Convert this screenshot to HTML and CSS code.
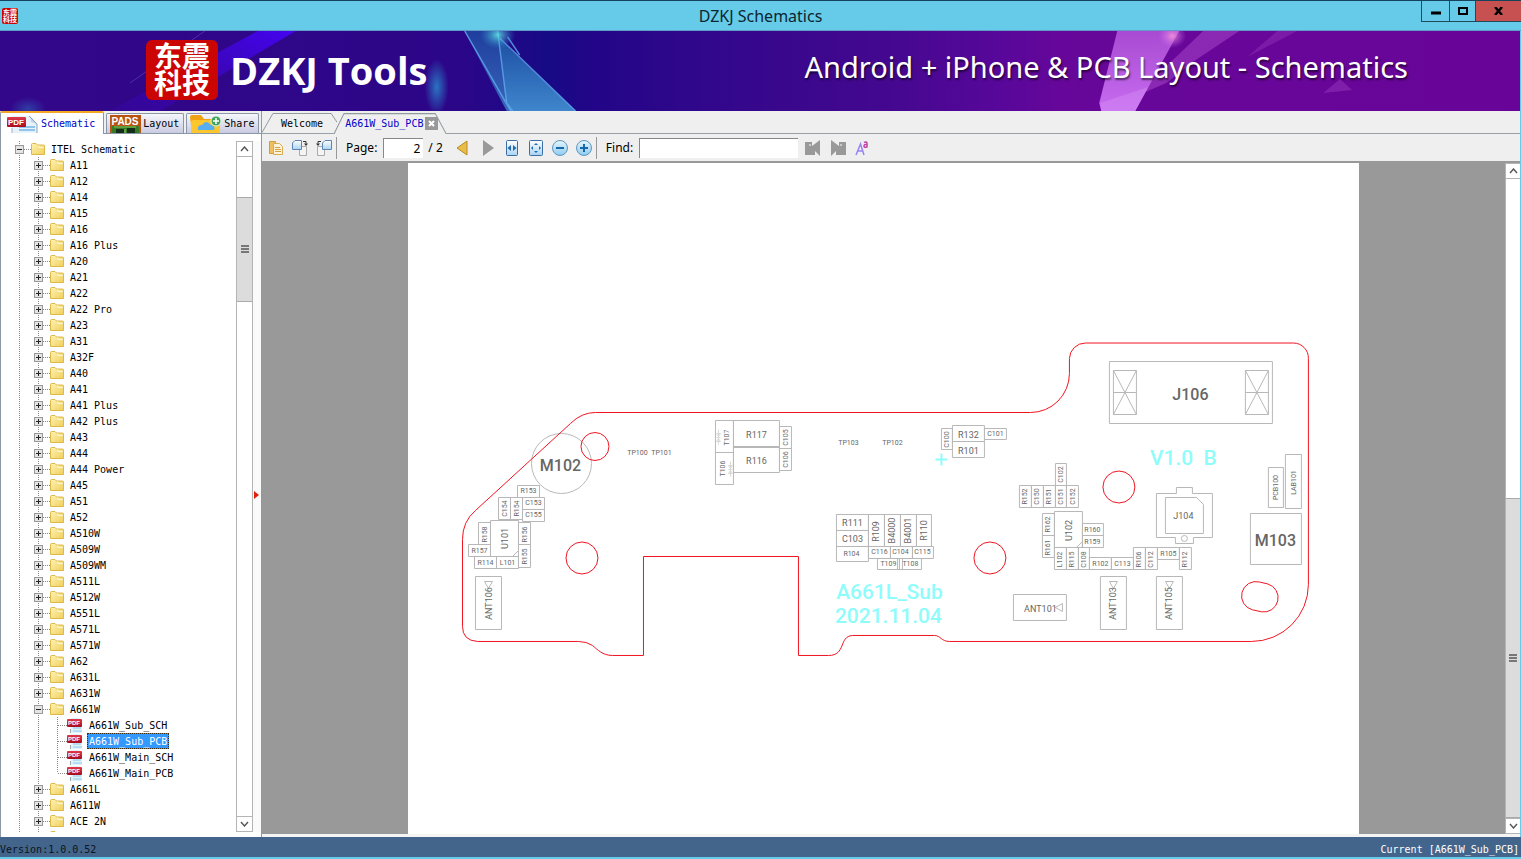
FILE: index.html
```html
<!DOCTYPE html>
<html lang="en">

<head>
    <meta charset="utf-8">
    <meta name="viewport" content="width=device-width, initial-scale=1">
    <title>DZKJ Schematics</title>
    <link rel="stylesheet" href="styles.css">
</head>

<body>
    <!-- shared icons -->
    <svg class="defs" width="0" height="0" aria-hidden="true">
        <defs>
            <linearGradient id="folder-fill" x1="0" y1="0" x2="1" y2="1">
                <stop offset="0" stop-color="#fff3b4"/>
                <stop offset="1" stop-color="#f0cf5c"/>
            </linearGradient>
            <linearGradient id="pdf-fill" x1="0" y1="0" x2="0" y2="1">
                <stop offset="0" stop-color="#e0394a"/>
                <stop offset="1" stop-color="#a80c1c"/>
            </linearGradient>
            <linearGradient id="ball-fill" x1="0" y1="0" x2="0" y2="1">
                <stop offset="0" stop-color="#e8f6fd"/>
                <stop offset="1" stop-color="#8dcbf0"/>
            </linearGradient>
            <linearGradient id="page-fill" x1="0" y1="0" x2="0" y2="1">
                <stop offset="0" stop-color="#ffffff"/>
                <stop offset="1" stop-color="#a9d3f2"/>
            </linearGradient>
        </defs>
        <symbol id="folder" viewBox="0 0 14 12">
            <path d="M.5 11.5V1.5q0-1 1-1h3.500l1.500 1.500h6q1 0 1 1v8.500z" fill="url(#folder-fill)" stroke="#dcb84a"/>
            <path d="M8 2.500V4.500h5" fill="none" stroke="#fff6cc"/>
        </symbol>
        <symbol id="pdf" viewBox="0 0 16 16">
            <path d="M4 1h8l3 3v12H4z" fill="#dff1fb"/>
            <path d="M6 11h8M6 14h9" stroke="#8ecbe8"/>
            <path d="M3.500 12v4" stroke="#9aa"/>
            <rect x="0" y="2" width="15" height="8" rx="1" fill="url(#pdf-fill)"/>
            <text x="7" y="8" class="pdf-mark-small">PDF</text>
        </symbol>
        <symbol id="plus" viewBox="0 0 9 9">
            <rect x=".5" y=".5" width="8" height="8" fill="#e4e4e4" stroke="#999"/>
            <path d="M2 4.500h5M4.500 2v5" stroke="#222"/>
        </symbol>
        <symbol id="minus" viewBox="0 0 9 9">
            <rect x=".5" y=".5" width="8" height="8" fill="#e4e4e4" stroke="#999"/>
            <path d="M2 4.500h5" stroke="#222"/>
        </symbol>
        <symbol id="up" viewBox="0 0 9 6"><path d="M1 5l3.500-4L8 5" fill="none" stroke="#555" stroke-width="1.400"/></symbol>
        <symbol id="down" viewBox="0 0 9 6"><path d="M1 1l3.500 4L8 1" fill="none" stroke="#555" stroke-width="1.400"/></symbol>
        <symbol id="grip" viewBox="0 0 8 8"><path d="M0 1h8M0 4h8M0 7h8" stroke="#555" stroke-width="1.500"/></symbol>
    </svg>

    <header class="titlebar">
        <span class="app-icon">东震<br>科技</span>
        <h1>DZKJ Schematics</h1>
        <div class="window-buttons">
            <button type="button" class="win-min" aria-label="Minimize"><svg width="10" height="8" viewBox="0 0 10 8"><path d="M0 6h10" stroke="#000" stroke-width="3"/></svg></button>
            <button type="button" class="win-max" aria-label="Maximize"><svg width="10" height="8" viewBox="0 0 10 8"><rect x="1" y="1" width="8" height="6" fill="none" stroke="#000" stroke-width="2"/></svg></button>
            <button type="button" class="win-close" aria-label="Close"><svg width="9" height="8" viewBox="0 0 9 8"><path d="M1 0l7 8M8 0L1 8" stroke="#000" stroke-width="2.500"/></svg></button>
        </div>
    </header>

    <div class="banner">
        <svg class="banner-art" viewBox="0 0 1521 80" preserveAspectRatio="none" aria-hidden="true">
            <defs>
                <linearGradient id="sky" x1="0" x2="1" y1="0" y2="0">
                    <stop offset="0" stop-color="#33078a"/>
                    <stop offset=".3" stop-color="#2c0688"/>
                    <stop offset=".36" stop-color="#170a85"/>
                    <stop offset=".39" stop-color="#220588"/>
                    <stop offset=".44" stop-color="#2d078a"/>
                    <stop offset=".58" stop-color="#43088f"/>
                    <stop offset=".66" stop-color="#58079a"/>
                    <stop offset=".7" stop-color="#67079a"/>
                    <stop offset="1" stop-color="#680598"/>
                </linearGradient>
                <linearGradient id="beam" x1="1" x2="0" y1="0" y2="1">
                    <stop offset="0" stop-color="#4404f0"/>
                    <stop offset="1" stop-color="#3b06b0" stop-opacity=".3"/>
                </linearGradient>
                <linearGradient id="glass" x1="0" x2="0" y1="0" y2="1">
                    <stop offset="0" stop-color="#1d4fa4"/>
                    <stop offset="1" stop-color="#3f86cc"/>
                </linearGradient>
                <linearGradient id="pink" x1="0" x2="0" y1="0" y2="1">
                    <stop offset="0" stop-color="#a84bd2"/>
                    <stop offset="1" stop-color="#c76cf0"/>
                </linearGradient>
                <radialGradient id="glow">
                    <stop offset="0" stop-color="#2a80c8" stop-opacity=".9"/>
                    <stop offset="1" stop-color="#2a80c8" stop-opacity="0"/>
                </radialGradient>
                <radialGradient id="glow-teal">
                    <stop offset="0" stop-color="#5ee0e0" stop-opacity=".9"/>
                    <stop offset="1" stop-color="#2a80c8" stop-opacity="0"/>
                </radialGradient>
                <radialGradient id="glow-rose">
                    <stop offset="0" stop-color="#ff9ad8" stop-opacity=".8"/>
                    <stop offset="1" stop-color="#c76cf0" stop-opacity="0"/>
                </radialGradient>
            </defs>
            <rect width="1521" height="80" fill="url(#sky)"/>
            <path d="M258 0h38L160 80h-50z" fill="url(#beam)"/>
            <path d="M205 0L130 52" stroke="#6c50d0" opacity=".5"/>
            <ellipse cx="28" cy="78" rx="18" ry="12" fill="url(#glow)" opacity=".5"/>
            <ellipse cx="437" cy="56" rx="12" ry="28" fill="url(#glow)"/>
            <path d="M465 0h33l2 8 12 72h-5z" fill="url(#glass)" opacity=".75"/>
            <path d="M500 8l76 72h-64l-5-10z" fill="url(#glass)"/>
            <path d="M465 0l46 80M498 0l9 72 6 8M500 7l76 73M508 6l12 18" fill="none" stroke="#62a9ee" stroke-width="1.500" opacity=".8"/>
            <ellipse cx="498" cy="4" rx="18" ry="14" fill="url(#glow-teal)"/>
            <path d="M1204 0h36l-45 30-28 22-32 14z" fill="#9a38be" opacity=".7"/>
            <path d="M1278 0h20l-50 26z" fill="#8424ae" opacity=".7"/>
            <path d="M1118 0h62l-44 80h-34l-2-8z" fill="url(#pink)"/>
            <path d="M1101 72l48-16-13 24h-34z" fill="#d48af4" opacity=".5"/>
            <ellipse cx="1173" cy="5" rx="14" ry="12" fill="url(#glow-rose)"/>
            <path d="M1341 48l12 11-29 3z" fill="#8424ae" opacity=".8"/>
        </svg>
        <div class="brand">
            <span class="logo">东震<br>科技</span>
            <strong>DZKJ Tools</strong>
        </div>
        <p class="slogan">Android + iPhone &amp; PCB Layout - Schematics</p>
    </div>

    <main class="workspace">
        <aside class="sidebar">
            <nav class="side-tabs">
                <button type="button" class="side-tab active">
                    <svg width="32" height="19" viewBox="0 0 32 19"><path d="M5 2h18l7 7v10H5z" fill="#e6f2fc"/><path d="M23 2l1 6 6 2z" fill="#c5d4e4"/><path d="M22 2l8 8v9" fill="none" stroke="#8fa0b4"/><path d="M12 13h16M12 16h16" stroke="#8fc5ea" stroke-width="2"/><path d="M5 14v5" stroke="#aab"/><rect x="0" y="3" width="19" height="10" rx="1" fill="url(#pdf-fill)"/><text x="9" y="11" class="pdf-mark">PDF</text></svg>
                    <span>Schematic</span>
                </button>
                <button type="button" class="side-tab">
                    <svg width="31" height="18" viewBox="0 0 31 18"><rect width="31" height="18" fill="#b85512"/><rect x="2" y="11" width="27" height="7" fill="#347a28"/><path d="M6 14h8v4H6zM17 13h8v5h-8z" fill="#152e18"/><path d="M4 12h22M15 14v4" stroke="#8cc152"/><text x="15" y="10" class="pads-mark">PADS</text></svg>
                    <span>Layout</span>
                </button>
                <button type="button" class="side-tab">
                    <svg width="32" height="18" viewBox="0 0 32 18"><path d="M0 2q0-2 2-2h9l3 4h16v14H2z" fill="#f0a312"/><path d="M1 7q0-2 3-2h26v13H1z" fill="#fdc62d"/><path d="M8 15q-1-5 4-5 4-6 9 0 5 1 3 5z" fill="#58aef0"/><circle cx="26" cy="6" r="5" fill="#3fa45b" stroke="#e6f5e9"/><path d="M23 6h6M26 3v6" stroke="#fff" stroke-width="1.500"/></svg>
                    <span>Share</span>
                </button>
            </nav>
            <div class="side-panel">
                <div class="tree">
                    <ul>
                        <li><div class="row"><button class="toggle" aria-label="Collapse"><svg><use href="#minus"/></svg></button><i></i><svg class="folder"><use href="#folder"/></svg><span>ITEL Schematic</span></div>
                            <ul>
                                <li><div class="row"><button class="toggle" aria-label="Expand"><svg><use href="#plus"/></svg></button><i></i><svg class="folder"><use href="#folder"/></svg><span>A11</span></div></li>
                                <li><div class="row"><button class="toggle" aria-label="Expand"><svg><use href="#plus"/></svg></button><i></i><svg class="folder"><use href="#folder"/></svg><span>A12</span></div></li>
                                <li><div class="row"><button class="toggle" aria-label="Expand"><svg><use href="#plus"/></svg></button><i></i><svg class="folder"><use href="#folder"/></svg><span>A14</span></div></li>
                                <li><div class="row"><button class="toggle" aria-label="Expand"><svg><use href="#plus"/></svg></button><i></i><svg class="folder"><use href="#folder"/></svg><span>A15</span></div></li>
                                <li><div class="row"><button class="toggle" aria-label="Expand"><svg><use href="#plus"/></svg></button><i></i><svg class="folder"><use href="#folder"/></svg><span>A16</span></div></li>
                                <li><div class="row"><button class="toggle" aria-label="Expand"><svg><use href="#plus"/></svg></button><i></i><svg class="folder"><use href="#folder"/></svg><span>A16 Plus</span></div></li>
                                <li><div class="row"><button class="toggle" aria-label="Expand"><svg><use href="#plus"/></svg></button><i></i><svg class="folder"><use href="#folder"/></svg><span>A20</span></div></li>
                                <li><div class="row"><button class="toggle" aria-label="Expand"><svg><use href="#plus"/></svg></button><i></i><svg class="folder"><use href="#folder"/></svg><span>A21</span></div></li>
                                <li><div class="row"><button class="toggle" aria-label="Expand"><svg><use href="#plus"/></svg></button><i></i><svg class="folder"><use href="#folder"/></svg><span>A22</span></div></li>
                                <li><div class="row"><button class="toggle" aria-label="Expand"><svg><use href="#plus"/></svg></button><i></i><svg class="folder"><use href="#folder"/></svg><span>A22 Pro</span></div></li>
                                <li><div class="row"><button class="toggle" aria-label="Expand"><svg><use href="#plus"/></svg></button><i></i><svg class="folder"><use href="#folder"/></svg><span>A23</span></div></li>
                                <li><div class="row"><button class="toggle" aria-label="Expand"><svg><use href="#plus"/></svg></button><i></i><svg class="folder"><use href="#folder"/></svg><span>A31</span></div></li>
                                <li><div class="row"><button class="toggle" aria-label="Expand"><svg><use href="#plus"/></svg></button><i></i><svg class="folder"><use href="#folder"/></svg><span>A32F</span></div></li>
                                <li><div class="row"><button class="toggle" aria-label="Expand"><svg><use href="#plus"/></svg></button><i></i><svg class="folder"><use href="#folder"/></svg><span>A40</span></div></li>
                                <li><div class="row"><button class="toggle" aria-label="Expand"><svg><use href="#plus"/></svg></button><i></i><svg class="folder"><use href="#folder"/></svg><span>A41</span></div></li>
                                <li><div class="row"><button class="toggle" aria-label="Expand"><svg><use href="#plus"/></svg></button><i></i><svg class="folder"><use href="#folder"/></svg><span>A41 Plus</span></div></li>
                                <li><div class="row"><button class="toggle" aria-label="Expand"><svg><use href="#plus"/></svg></button><i></i><svg class="folder"><use href="#folder"/></svg><span>A42 Plus</span></div></li>
                                <li><div class="row"><button class="toggle" aria-label="Expand"><svg><use href="#plus"/></svg></button><i></i><svg class="folder"><use href="#folder"/></svg><span>A43</span></div></li>
                                <li><div class="row"><button class="toggle" aria-label="Expand"><svg><use href="#plus"/></svg></button><i></i><svg class="folder"><use href="#folder"/></svg><span>A44</span></div></li>
                                <li><div class="row"><button class="toggle" aria-label="Expand"><svg><use href="#plus"/></svg></button><i></i><svg class="folder"><use href="#folder"/></svg><span>A44 Power</span></div></li>
                                <li><div class="row"><button class="toggle" aria-label="Expand"><svg><use href="#plus"/></svg></button><i></i><svg class="folder"><use href="#folder"/></svg><span>A45</span></div></li>
                                <li><div class="row"><button class="toggle" aria-label="Expand"><svg><use href="#plus"/></svg></button><i></i><svg class="folder"><use href="#folder"/></svg><span>A51</span></div></li>
                                <li><div class="row"><button class="toggle" aria-label="Expand"><svg><use href="#plus"/></svg></button><i></i><svg class="folder"><use href="#folder"/></svg><span>A52</span></div></li>
                                <li><div class="row"><button class="toggle" aria-label="Expand"><svg><use href="#plus"/></svg></button><i></i><svg class="folder"><use href="#folder"/></svg><span>A510W</span></div></li>
                                <li><div class="row"><button class="toggle" aria-label="Expand"><svg><use href="#plus"/></svg></button><i></i><svg class="folder"><use href="#folder"/></svg><span>A509W</span></div></li>
                                <li><div class="row"><button class="toggle" aria-label="Expand"><svg><use href="#plus"/></svg></button><i></i><svg class="folder"><use href="#folder"/></svg><span>A509WM</span></div></li>
                                <li><div class="row"><button class="toggle" aria-label="Expand"><svg><use href="#plus"/></svg></button><i></i><svg class="folder"><use href="#folder"/></svg><span>A511L</span></div></li>
                                <li><div class="row"><button class="toggle" aria-label="Expand"><svg><use href="#plus"/></svg></button><i></i><svg class="folder"><use href="#folder"/></svg><span>A512W</span></div></li>
                                <li><div class="row"><button class="toggle" aria-label="Expand"><svg><use href="#plus"/></svg></button><i></i><svg class="folder"><use href="#folder"/></svg><span>A551L</span></div></li>
                                <li><div class="row"><button class="toggle" aria-label="Expand"><svg><use href="#plus"/></svg></button><i></i><svg class="folder"><use href="#folder"/></svg><span>A571L</span></div></li>
                                <li><div class="row"><button class="toggle" aria-label="Expand"><svg><use href="#plus"/></svg></button><i></i><svg class="folder"><use href="#folder"/></svg><span>A571W</span></div></li>
                                <li><div class="row"><button class="toggle" aria-label="Expand"><svg><use href="#plus"/></svg></button><i></i><svg class="folder"><use href="#folder"/></svg><span>A62</span></div></li>
                                <li><div class="row"><button class="toggle" aria-label="Expand"><svg><use href="#plus"/></svg></button><i></i><svg class="folder"><use href="#folder"/></svg><span>A631L</span></div></li>
                                <li><div class="row"><button class="toggle" aria-label="Expand"><svg><use href="#plus"/></svg></button><i></i><svg class="folder"><use href="#folder"/></svg><span>A631W</span></div></li>
                                <li><div class="row"><button class="toggle" aria-label="Collapse"><svg><use href="#minus"/></svg></button><i></i><svg class="folder"><use href="#folder"/></svg><span>A661W</span></div>
                                    <ul class="files">
                                        <li><div class="row"><i></i><svg class="file"><use href="#pdf"/></svg><a href="#">A661W_Sub_SCH</a></div></li>
                                        <li><div class="row"><i></i><svg class="file"><use href="#pdf"/></svg><a href="#" class="selected">A661W_Sub_PCB</a></div></li>
                                        <li><div class="row"><i></i><svg class="file"><use href="#pdf"/></svg><a href="#">A661W_Main_SCH</a></div></li>
                                        <li><div class="row"><i></i><svg class="file"><use href="#pdf"/></svg><a href="#">A661W_Main_PCB</a></div></li>
                                    </ul>
                                </li>
                                <li><div class="row"><button class="toggle" aria-label="Expand"><svg><use href="#plus"/></svg></button><i></i><svg class="folder"><use href="#folder"/></svg><span>A661L</span></div></li>
                                <li><div class="row"><button class="toggle" aria-label="Expand"><svg><use href="#plus"/></svg></button><i></i><svg class="folder"><use href="#folder"/></svg><span>A611W</span></div></li>
                                <li><div class="row"><button class="toggle" aria-label="Expand"><svg><use href="#plus"/></svg></button><i></i><svg class="folder"><use href="#folder"/></svg><span>ACE 2N</span></div></li>
                                <li><div class="row"><button class="toggle" aria-label="Expand"><svg><use href="#plus"/></svg></button><i></i><svg class="folder"><use href="#folder"/></svg></div></li>
                            </ul>
                        </li>
                    </ul>
                </div>
                <div class="scrollbar tree-scroll">
                    <button type="button" aria-label="Scroll up"><svg width="9" height="6"><use href="#up"/></svg></button>
                    <div class="track-before"></div>
                    <div class="thumb"><svg width="8" height="8"><use href="#grip"/></svg></div>
                    <div class="track-after"></div>
                    <button type="button" aria-label="Scroll down"><svg width="9" height="6"><use href="#down"/></svg></button>
                </div>
                <div class="splitter"><svg width="5" height="8" viewBox="0 0 5 8"><path d="M0 0l5 4-5 4z" fill="#e0200c"/></svg></div>
            </div>
        </aside>

        <section class="viewer">
            <nav class="doc-tabs">
                <button type="button" class="doc-tab welcome">
                    <svg viewBox="0 0 76 22" preserveAspectRatio="none"><path d="M0 21.500L11 2.500h59l6 9" /></svg>
                    <span>Welcome</span>
                </button>
                <div class="doc-tab active">
                    <svg viewBox="0 0 112 22" preserveAspectRatio="none"><path d="M0 22L10 2.500h91L112 22"/></svg>
                    <button type="button" class="doc-name">A661W_Sub_PCB</button>
                    <button type="button" class="tab-close" aria-label="Close tab"><svg width="7" height="7" viewBox="0 0 7 7"><path d="M1 1l5 5M6 1L1 6" stroke="#fff" stroke-width="2"/></svg></button>
                </div>
            </nav>

            <div class="toolbar">
                <button type="button" aria-label="Open"><svg width="16" height="16" viewBox="0 0 16 16"><path d="M1.500 1.500h6v12h-6z" fill="#f0c060" stroke="#cf9c3c"/><path d="M5.500 3.500h6l3 3v8h-9z" fill="#fdf3d8" stroke="#d9ab55"/><path d="M7 7.500h5M7 9.500h6M7 11.500h6" stroke="#cfa04a"/></svg></button>
                <button type="button" aria-label="Rotate right"><svg width="16" height="16" viewBox="0 0 16 16"><path d="M7.500 6.500h7v9h-7z" fill="#f4f4f4" stroke="#aaa"/><path d="M.5 3l2.500-2.500h6.500v9H.5z" fill="url(#page-fill)" stroke="#5b86b4"/><path d="M11 1.500h3v2" fill="none" stroke="#333"/><path d="M12 3.500h4l-2 2.500z" fill="#333"/></svg></button>
                <button type="button" aria-label="Rotate left"><svg width="16" height="16" viewBox="0 0 16 16"><path d="M1.500 6.500h7v9h-7z" fill="#f4f4f4" stroke="#aaa"/><path d="M6.500 3L9 .5h6.500v9h-9z" fill="url(#page-fill)" stroke="#5b86b4"/><path d="M5 1.500H2v2" fill="none" stroke="#333"/><path d="M0 3.500h4L2 6z" fill="#333"/></svg></button>
                <span class="separator"></span>
                <label for="page-number">Page:</label>
                <input type="text" id="page-number" value="2">
                <span class="page-count">/ 2</span>
                <button type="button" aria-label="Previous page"><svg width="12" height="16" viewBox="0 0 12 16"><path d="M11 1v14L1 8z" fill="#e9bd4a" stroke="#b98a1c"/></svg></button>
                <button type="button" class="next" aria-label="Next page"><svg width="12" height="16" viewBox="0 0 12 16"><path d="M1 0v16l11-8z" fill="#999"/></svg></button>
                <button type="button" aria-label="Fit width"><svg width="12" height="16" viewBox="0 0 12 16"><rect x=".5" y=".5" width="11" height="15" rx="1" fill="url(#page-fill)" stroke="#3a6ea5"/><path d="M5 5v6L1.500 8zM7 5v6l3.500-3z" fill="#1f6cb0"/></svg></button>
                <button type="button" aria-label="Fit page"><svg width="14" height="16" viewBox="0 0 14 16"><rect x=".5" y=".5" width="13" height="15" rx="1" fill="url(#page-fill)" stroke="#3a6ea5"/><path d="M7 3l2 2H5zM7 13l-2-2h4zM2 8l2-2v4zM12 8l-2-2v4z" fill="#1f6cb0"/></svg></button>
                <button type="button" aria-label="Zoom out"><svg width="16" height="16" viewBox="0 0 16 16"><circle cx="8" cy="8" r="7.500" fill="url(#ball-fill)" stroke="#5f97bd"/><path d="M4 8h8" stroke="#1668a8" stroke-width="2"/></svg></button>
                <button type="button" aria-label="Zoom in"><svg width="16" height="16" viewBox="0 0 16 16"><circle cx="8" cy="8" r="7.500" fill="url(#ball-fill)" stroke="#5f97bd"/><path d="M4 8h8M8 4v8" stroke="#1668a8" stroke-width="2"/></svg></button>
                <span class="separator"></span>
                <label for="find">Find:</label>
                <input type="text" id="find">
                <button type="button" class="next" aria-label="Find previous"><svg width="15" height="16" viewBox="0 0 15 16"><path d="M0 2h7v4l8-6v16l-5-5v4H0z" fill="#999"/><circle cx="5" cy="5" r="1" fill="#ddd"/></svg></button>
                <button type="button" class="next" aria-label="Find next"><svg width="15" height="16" viewBox="0 0 15 16"><path d="M15 2H8v4L0 0v16l5-5v4h10z" fill="#999"/><circle cx="10" cy="5" r="1" fill="#ddd"/></svg></button>
                <button type="button" aria-label="Match case"><svg width="14" height="16" viewBox="0 0 14 16"><path d="M1 15L5.500 4 9 15M3 11h5" fill="none" stroke="#9a82f4" stroke-width="1.500"/><path d="M9 2.500q3-1.500 3 1v4M12 4.500q-3-.5-3 1.500t3 1" fill="none" stroke="#c044a4" stroke-width="1.500"/></svg></button>
            </div>

            <div class="canvas">
                <div class="sheet-area">
                    <div class="sheet">
                        <svg class="board" viewBox="407.500 162.500 951 671" role="img" aria-label="A661W Sub PCB">
                            <!-- part outlines -->
                            <g class="parts">
                                <circle cx="561" cy="463" r="30"/>
                                <path d="M517 485h22v12h-22zM498 497h12v22h-12zM510 497h12v22h-12zM522 497h22v12h-22zM522 509h22v12h-22z"/>
                                <path d="M478 522h12v22h-12zM490 520h28v36h-28zM518 522h12v22h-12zM468 544h22v12h-22zM518 544h12v23h-12zM474 556h22v12h-22zM496 556h22v12h-22zM512 556l6-6"/>
                                <path d="M475 576h26v53h-26zM484 581h8l-4 7z"/>
                                <path d="M715 420h18v32h-18zM715 452h18v32h-18zM733 420h46v26h-46zM733 447h46v25h-46zM779 426h12v22h-12zM779 448h12v22h-12z"/>
                                <path class="faint" d="M718 429v15M716 433l4 0-2 3zM716 437h4M716 441h4l-2-3zM730 461v15M728 465h4l-2 3zM728 469h4M728 473h4l-2-3z"/>
                                <path d="M941 428h11v21h-11zM952 425h32v16h-32zM952 441h32v16h-32zM984 428h22v11h-22z"/>
                                <path d="M836 514h32v16h-32zM836 530h32v16h-32zM836 546h32v15h-32zM868 514h16v32h-16zM884 514h16v32h-16zM900 514h16v32h-16zM916 514h15v32h-15zM868 546h22v12h-22zM890 546h22v12h-22zM912 546h21v12h-21zM877 558h22v11h-22zM899 558h22v11h-22zM897 558v11M902 558v11"/>
                                <path d="M1055 463h11v22h-11zM1019 485h12v22h-12zM1031 485h12v22h-12zM1043 485h12v22h-12zM1055 485h11v22h-11zM1066 485h12v22h-12z"/>
                                <path d="M1042 513h12v22h-12zM1042 535h12v22h-12zM1054 511h28v36h-28zM1076 547l6-6M1082 523h21v12h-21zM1082 535h21v12h-21z"/>
                                <path d="M1054 547h12v22h-12zM1066 547h12v22h-12zM1078 547h11v22h-11zM1089 557h22v12h-22zM1111 557h22v12h-22zM1133 547h12v22h-12zM1145 547h12v22h-12zM1157 547h22v12h-22zM1179 547h12v22h-12z"/>
                                <path d="M1100 576h26v53h-26zM1109 581h8l-4 7zM1156 576h26v53h-26zM1165 581h8l-4 7zM1013 594h53v26h-53zM1062 603v8l-7-4z"/>
                                <path d="M1156 493h20v-6h16v6h20v44h-19v6h-18v-6h-19zM1165 497h31l7 7v29h-38z"/>
                                <circle cx="1184" cy="538" r="3"/>
                                <path d="M1109 361h163v62h-163zM1113 370h23v44h-23zl23 44M1136 370l-23 44M1113 392h23M1245 370h23v44h-23zl23 44M1268 370l-23 44M1245 392h23"/>
                                <path d="M1268 467h15v40h-15zM1285 454h16v54h-16zM1250 513h51v51h-51z"/>
                            </g>

                            <!-- board edge and drill holes -->
                            <g class="edge">
                                <path d="M643 556V655H612C602 655 597 649 592 645Q586 641 578 641H477Q462 640 462 626V539Q462 521 475 510L570 423Q581 412 595 412H1030A39 39 0 0 0 1069 373V358A16 16 0 0 1 1085 342.500H1293A15 15 0 0 1 1308 358V584A57 57 0 0 1 1251 641H949C941 641 940 635 934 635H852C838 636 846 655 828 655H798V556Z"/>
                                <circle cx="594.500" cy="446" r="14"/>
                                <circle cx="581.500" cy="557.500" r="16"/>
                                <circle cx="989.500" cy="557.500" r="16"/>
                                <circle cx="1118.500" cy="486.500" r="16"/>
                                <path d="M1259 581.500L1267.500 583.500A14.300 14.300 0 0 1 1261 611.300L1252 609.300A14.300 14.300 0 0 1 1259 581.500Z"/>
                            </g>

                            <g class="label small">
                                <text x="528" y="491">R153</text><text x="533" y="503">C153</text><text x="533" y="515">C155</text>
                                <text class="v" x="504" y="508">C154</text><text class="v" x="516" y="508">R154</text>
                                <text class="v" x="484" y="534">R158</text><text class="v" x="524" y="534">R156</text>
                                <text x="479" y="551">R157</text><text class="v" x="524" y="556">R155</text>
                                <text x="485" y="563">R114</text><text x="507" y="563">L101</text>
                                <text x="637" y="453">TP100</text><text x="661" y="453">TP101</text>
                                <text class="v" x="727" y="437">T107</text><text class="v" x="723" y="468">T106</text>
                                <text class="v" x="786" y="437">C105</text><text class="v" x="786" y="459">C106</text>
                                <text x="848" y="443">TP103</text><text x="892" y="443">TP102</text>
                                <text class="v" x="947" y="439">C100</text><text x="995" y="434">C101</text>
                                <text x="851" y="554">R104</text><text x="879" y="552">C116</text><text x="900" y="552">C104</text><text x="922" y="552">C115</text>
                                <text x="888" y="564">T109</text><text x="910" y="564">T108</text>
                                <text class="v" x="1061" y="474">C102</text><text class="v" x="1025" y="496">R152</text><text class="v" x="1037" y="496">C150</text><text class="v" x="1049" y="496">R151</text><text class="v" x="1061" y="496">C151</text><text class="v" x="1073" y="496">C152</text>
                                <text class="v" x="1048" y="524">R162</text><text class="v" x="1048" y="547">R161</text>
                                <text x="1092" y="530">R160</text><text x="1092" y="542">R159</text>
                                <text class="v" x="1060" y="559">L102</text><text class="v" x="1072" y="559">R115</text><text class="v" x="1084" y="559">C108</text>
                                <text x="1100" y="564">R102</text><text x="1122" y="564">C113</text>
                                <text class="v" x="1139" y="559">R106</text><text class="v" x="1151" y="559">C112</text><text x="1168" y="554">R105</text><text class="v" x="1185" y="559">R112</text>
                                <text class="v" x="1276" y="487">PCB100</text><text class="v" x="1294" y="482">LAB101</text>
                            </g>
                            <g class="label medium">
                                <text class="v" x="505" y="538">U101</text><text class="v" x="489" y="603">ANT106</text>
                                <text x="756" y="435">R117</text><text x="756" y="461">R116</text>
                                <text x="968" y="435">R132</text><text x="968" y="451">R101</text>
                                <text x="852" y="523">R111</text><text x="852" y="539">C103</text>
                                <text class="v" x="876" y="531">R109</text><text class="v" x="892" y="530">B4000</text><text class="v" x="908" y="530">B4001</text><text class="v" x="924" y="530">R110</text>
                                <text class="v" x="1069" y="530">U102</text><text x="1183" y="516">J104</text>
                                <text x="1040" y="609">ANT101</text><text class="v" x="1113" y="603">ANT103</text><text class="v" x="1169" y="603">ANT105</text>
                            </g>
                            <g class="label large">
                                <text x="560" y="465">M102</text>
                                <text x="1190" y="394">J106</text>
                                <text x="1275" y="540">M103</text>
                            </g>
                            <g class="silk">
                                <path d="M941 453v12M935 459h12"/>
                                <text x="889" y="592">A661L_Sub</text>
                                <text x="888" y="616">2021.11.04</text>
                                <text x="1183" y="458">V1.0&nbsp; B</text>
                            </g>
                        </svg>
                    </div>
                </div>
                <div class="scrollbar page-scroll">
                    <button type="button" aria-label="Scroll up"><svg width="9" height="6"><use href="#up"/></svg></button>
                    <div class="track-before"></div>
                    <div class="thumb"><svg width="8" height="8"><use href="#grip"/></svg></div>
                    <button type="button" aria-label="Scroll down"><svg width="9" height="6"><use href="#down"/></svg></button>
                </div>
            </div>
        </section>
    </main>

    <footer class="statusbar">
        <span>Version:1.0.0.52</span>
        <span class="current">Current [A661W_Sub_PCB]</span>
    </footer>
</body>

</html>
```
FILE: styles.css
```css
* {
    box-sizing: border-box;
}

body {
    margin: 0;
    height: 100vh;
    display: flex;
    flex-direction: column;
    overflow: hidden;
    background-color: #65cbe9;
    font-family: "DejaVu Sans Mono", "Liberation Mono", monospace;
    font-size: 10px;
    color: #000;
}

button {
    margin: 0;
    padding: 0;
    border: none;
    background: none;
    font: inherit;
    color: inherit;
    cursor: pointer;
}

svg {
    display: block;
    flex-shrink: 0;
}

ul {
    list-style: none;
    margin: 0;
    padding: 0;
}

.defs {
    position: absolute;
}

/* window title */
.titlebar {
    height: 31px;
    flex-shrink: 0;
    display: grid;
    grid-template-columns: 1fr auto 1fr;
    align-items: center;
    border-top: 1px solid #17425c;
    border-bottom: 1px solid #5f9cc8;
}

.titlebar h1 {
    margin: 0;
    font-family: "Noto Sans", sans-serif;
    font-size: 16px;
    line-height: 24px;
    font-weight: normal;
    color: #0c2530;
}

.app-icon,
.logo {
    background-color: #cb0404;
    color: #fff;
    font-family: "Noto Sans CJK SC", sans-serif;
    font-weight: bold;
    text-align: center;
}

.app-icon {
    width: 16px;
    height: 16px;
    margin-left: 2px;
    padding-top: 1px;
    border-radius: 2px;
    font-size: 7px;
    line-height: 7px;
}

.window-buttons {
    display: flex;
    justify-content: flex-end;
    align-self: start;
}

.window-buttons button {
    width: 28px;
    height: 21px;
    display: flex;
    align-items: center;
    justify-content: center;
    border: 1px solid #23485a;
    border-top: none;
    border-right: none;
}

.window-buttons .win-max {
    width: 26px;
}

.window-buttons .win-close {
    width: 46px;
    background-color: #c75050;
}

/* banner */
.banner {
    position: relative;
    height: 80px;
    flex-shrink: 0;
    display: flex;
    align-items: center;
    justify-content: space-between;
    padding: 0 112px 2px 146px;
    margin-right: 1px;
    font-family: "Noto Sans", sans-serif;
    color: #fff;
}

.banner-art {
    position: absolute;
    left: 0;
    top: 0;
    width: 100%;
    height: 100%;
}

.brand,
.slogan {
    position: relative;
}

.brand {
    display: flex;
    align-items: center;
    gap: 12px;
}

.brand strong {
    font-family: "Open Sans", sans-serif;
    font-size: 38px;
    line-height: 40px;
}

.logo {
    width: 72px;
    height: 60px;
    padding-top: 2px;
    border-radius: 6px;
    font-size: 28px;
    line-height: 27px;
}

.slogan {
    margin: 0;
    padding-bottom: 6px;
    font-size: 29px;
    line-height: 40px;
    text-shadow: 1px 2px 2px rgba(0, 0, 0, 0.6);
}

/* main area */
.workspace {
    flex: 1;
    min-height: 0;
    display: flex;
    margin-right: 1px;
    background-color: #efefef;
}

.sidebar {
    width: 262px;
    flex-shrink: 0;
    display: flex;
    flex-direction: column;
    border-right: 1px solid #8d9aa3;
}

.side-tabs {
    height: 23px;
    flex-shrink: 0;
    display: flex;
    align-items: flex-end;
    gap: 2px;
    border-bottom: 1px solid #8a97a8;
}

.side-tab {
    height: 20px;
    display: flex;
    align-items: center;
    gap: 2px;
    padding: 0 4px 0 3px;
    border: 1px solid #8a97a8;
    border-bottom: none;
    border-radius: 2px 2px 0 0;
    background: linear-gradient(#f6f6fb, #c9cce2);
}

.side-tab.active {
    height: 23px;
    margin-bottom: -1px;
    padding: 0 8px 0 6px;
    border-top: 2px solid #f5a623;
    background: #fff;
    color: #0000c8;
}

.side-panel {
    flex: 1;
    min-height: 0;
    display: flex;
    padding: 7px 0 5px;
    border-left: 1px solid #8d9aa3;
    background-color: #fff;
}

.tree {
    flex: 1;
    overflow: hidden;
    padding-left: 14px;
}

.tree ul {
    background: repeating-linear-gradient(#888 0 1px, transparent 1px 2px) 4px 0 / 1px 100% no-repeat;
}

.tree ul ul {
    margin-left: 19px;
}

.tree .files {
    background-size: 1px calc(100% - 8px);
}

.row {
    height: 16px;
    display: flex;
    align-items: center;
    white-space: nowrap;
}

.row i {
    width: 7px;
    height: 1px;
    background: repeating-linear-gradient(90deg, #888 0 1px, transparent 1px 2px);
}

.files .row i {
    width: 9px;
    margin-left: 5px;
}

.toggle,
.toggle svg {
    width: 9px;
    height: 9px;
}

.folder {
    width: 14px;
    height: 12px;
}

.row span {
    margin-left: 6px;
}

.file {
    width: 16px;
    height: 16px;
}

.row a {
    margin-left: 4px;
    padding: 1px 1px 0;
    border: 1px solid transparent;
    line-height: 13px;
    color: #000;
    text-decoration: none;
}

.row a.selected {
    background-color: #3399ff;
    border: 1px dotted #402a10;
    color: #fff;
}

.pdf-mark,
.pdf-mark-small,
.pads-mark {
    font-family: "Liberation Sans", sans-serif;
    font-weight: bold;
    text-anchor: middle;
    fill: #fff;
}

.pdf-mark {
    font-size: 8px;
}

.pdf-mark-small {
    font-size: 6px;
}

.pads-mark {
    font-size: 10px;
}

/* scroll bars */
.scrollbar {
    display: flex;
    flex-direction: column;
    flex-shrink: 0;
    border: 1px solid #b4b4b4;
    background-color: #fff;
}

.scrollbar button,
.thumb {
    display: flex;
    align-items: center;
    justify-content: center;
}

.scrollbar button {
    height: 15px;
    flex-shrink: 0;
    border-bottom: 1px solid #b4b4b4;
}

.scrollbar button:last-child {
    border-bottom: none;
    border-top: 1px solid #b4b4b4;
}

.thumb {
    border: 1px solid #aaa;
    border-width: 1px 0;
    background-color: #dcdcdc;
}

.tree-scroll {
    width: 17px;
}

.tree-scroll .track-before {
    flex: 40;
}

.tree-scroll .thumb {
    flex: 103;
}

.tree-scroll .track-after {
    flex: 516;
}

.page-scroll {
    width: 15px;
    border-right: none;
}

.page-scroll .track-before,
.page-scroll .thumb {
    flex: 1;
}

.splitter {
    width: 8px;
    display: flex;
    align-items: center;
    padding: 16px 1px 0;
    background-color: #fafafa;
}

/* document viewer */
.viewer {
    flex: 1;
    min-width: 0;
    display: flex;
    flex-direction: column;
}

.doc-tabs {
    height: 23px;
    flex-shrink: 0;
    display: flex;
    align-items: flex-end;
    border-bottom: 1px solid #98a0a8;
}

.doc-tab {
    position: relative;
    height: 22px;
    display: flex;
    align-items: center;
}

.doc-tab > svg {
    position: absolute;
    left: 0;
    top: 0;
    width: 100%;
    height: 100%;
    fill: #efefef;
    stroke: #8f9a9f;
}

.doc-tab span,
.doc-name,
.tab-close {
    position: relative;
}

.doc-tab.welcome {
    padding: 2px 14px 0 19px;
}

.doc-tab.active {
    height: 23px;
    margin: 0 0 -1px -3px;
    padding: 2px 8px 0 11px;
    gap: 2px;
    color: #0000c8;
}

.tab-close {
    width: 13px;
    height: 13px;
    display: flex;
    align-items: center;
    justify-content: center;
    background-color: #999;
}

.toolbar {
    height: 29px;
    flex-shrink: 0;
    display: flex;
    align-items: center;
    padding-left: 2px;
    border-bottom: 2px solid #999;
    font-family: "Noto Sans", sans-serif;
    font-size: 12px;
}

.toolbar button {
    width: 24px;
    height: 24px;
    display: flex;
    align-items: center;
    justify-content: center;
}

.toolbar .next {
    margin-left: 2px;
}

.separator {
    width: 1px;
    height: 22px;
    background-color: #999;
}

.toolbar label {
    margin: 0 6px 0 9px;
}

.toolbar input {
    height: 20px;
    padding: 0 3px;
    border: none;
    border-top: 1px solid #888;
    border-left: 1px solid #888;
    background-color: #fff;
    font: inherit;
}

#page-number {
    width: 40px;
    text-align: right;
}

#find {
    width: 159px;
}

.page-count {
    margin: 0 7px 0 5px;
}

.canvas {
    flex: 1;
    min-height: 0;
    display: flex;
    border-bottom: 3px solid #f4f4f4;
}

.sheet-area {
    flex: 1;
    display: flex;
    justify-content: center;
    background-color: #999;
}

.sheet {
    width: 76.5%;
    background-color: #fff;
}

/* board drawing */
.board {
    width: 100%;
    height: 100%;
}

.parts {
    fill: none;
    stroke: #b8b8b8;
}

.parts .faint {
    stroke: #d8d8d8;
}

.edge {
    fill: none;
    stroke: #f01420;
}

.board text {
    font-family: Roboto, sans-serif;
    text-anchor: middle;
    dominant-baseline: central;
}

.label {
    fill: #666;
}

.v {
    transform-box: fill-box;
    transform-origin: center;
    transform: rotate(-90deg);
}

.small {
    font-size: 7px;
}

.medium {
    font-size: 9px;
}

.large {
    font-size: 16px;
    font-weight: 500;
}

.silk {
    font-size: 21px;
    font-weight: 500;
    fill: #8ffcfc;
}

.silk path {
    stroke: #8ffcfc;
    stroke-width: 2;
}

/* status bar */
.statusbar {
    height: 20px;
    flex-shrink: 0;
    display: flex;
    align-items: center;
    justify-content: space-between;
    margin-bottom: 2px;
    padding: 4px 2px 0 0;
    background-color: #43658b;
    color: #0c1420;
}

.statusbar .current {
    color: #fff;
}
```
